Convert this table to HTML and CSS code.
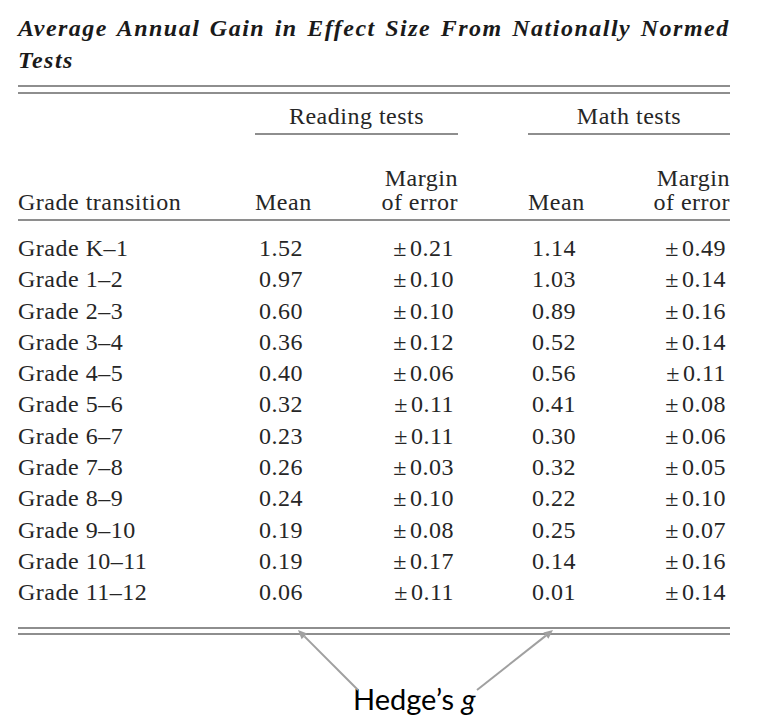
FILE: index.html
```html
<!DOCTYPE html>
<html lang="en">
<head>
<meta charset="utf-8">
<title>Average Annual Gain in Effect Size</title>
<link rel="stylesheet" href="styles.css">
</head>
<body>
<div class="page">
  <h1 class="title">Average Annual Gain in Effect Size From Nationally Normed<br>Tests</h1>
  <div class="double-rule top"></div>
  <table class="gains">
    <colgroup>
      <col class="c-grade"><col class="c-mean"><col class="c-moe"><col class="c-gap"><col class="c-mean"><col class="c-moe2">
    </colgroup>
    <thead>
      <tr class="groups">
        <th></th>
        <th colspan="2" class="group">Reading tests</th>
        <th></th>
        <th colspan="2" class="group">Math tests</th>
      </tr>
      <tr class="cols">
        <th class="lbl">Grade transition</th>
        <th class="mean">Mean</th>
        <th class="moe">Margin<br>of error</th>
        <th></th>
        <th class="mean">Mean</th>
        <th class="moe">Margin<br>of error</th>
      </tr>
    </thead>
    <tbody>
      <tr><td class="lbl">Grade K–1</td><td class="mean">1.52</td><td class="moe"><span class="pm">±</span>0.21</td><td></td><td class="mean">1.14</td><td class="moe"><span class="pm">±</span>0.49</td></tr>
      <tr><td class="lbl">Grade 1–2</td><td class="mean">0.97</td><td class="moe"><span class="pm">±</span>0.10</td><td></td><td class="mean">1.03</td><td class="moe"><span class="pm">±</span>0.14</td></tr>
      <tr><td class="lbl">Grade 2–3</td><td class="mean">0.60</td><td class="moe"><span class="pm">±</span>0.10</td><td></td><td class="mean">0.89</td><td class="moe"><span class="pm">±</span>0.16</td></tr>
      <tr><td class="lbl">Grade 3–4</td><td class="mean">0.36</td><td class="moe"><span class="pm">±</span>0.12</td><td></td><td class="mean">0.52</td><td class="moe"><span class="pm">±</span>0.14</td></tr>
      <tr><td class="lbl">Grade 4–5</td><td class="mean">0.40</td><td class="moe"><span class="pm">±</span>0.06</td><td></td><td class="mean">0.56</td><td class="moe"><span class="pm">±</span>0.11</td></tr>
      <tr><td class="lbl">Grade 5–6</td><td class="mean">0.32</td><td class="moe"><span class="pm">±</span>0.11</td><td></td><td class="mean">0.41</td><td class="moe"><span class="pm">±</span>0.08</td></tr>
      <tr><td class="lbl">Grade 6–7</td><td class="mean">0.23</td><td class="moe"><span class="pm">±</span>0.11</td><td></td><td class="mean">0.30</td><td class="moe"><span class="pm">±</span>0.06</td></tr>
      <tr><td class="lbl">Grade 7–8</td><td class="mean">0.26</td><td class="moe"><span class="pm">±</span>0.03</td><td></td><td class="mean">0.32</td><td class="moe"><span class="pm">±</span>0.05</td></tr>
      <tr><td class="lbl">Grade 8–9</td><td class="mean">0.24</td><td class="moe"><span class="pm">±</span>0.10</td><td></td><td class="mean">0.22</td><td class="moe"><span class="pm">±</span>0.10</td></tr>
      <tr><td class="lbl">Grade 9–10</td><td class="mean">0.19</td><td class="moe"><span class="pm">±</span>0.08</td><td></td><td class="mean">0.25</td><td class="moe"><span class="pm">±</span>0.07</td></tr>
      <tr><td class="lbl">Grade 10–11</td><td class="mean">0.19</td><td class="moe"><span class="pm">±</span>0.17</td><td></td><td class="mean">0.14</td><td class="moe"><span class="pm">±</span>0.16</td></tr>
      <tr><td class="lbl">Grade 11–12</td><td class="mean">0.06</td><td class="moe"><span class="pm">±</span>0.11</td><td></td><td class="mean">0.01</td><td class="moe"><span class="pm">±</span>0.14</td></tr>
    </tbody>
  </table>
  <div class="double-rule bottom"></div>
  <p class="caption">Hedge’s <em>g</em></p>
  <svg class="arrows" width="757" height="720" viewBox="0 0 757 720" aria-hidden="true">
    <line x1="358" y1="678" x2="304.4" y2="624.4" />
    <polygon points="298,618 307.2,621.6 301.6,627.2" />
    <line x1="477" y1="678" x2="545.9" y2="623.6" />
    <polygon points="553,618 548.4,626.7 543.4,620.4" />
  </svg>
</div>
</body>
</html>
```
FILE: styles.css
```css
html, body {
  margin: 0;
  padding: 0;
  background: #ffffff;
}

.page {
  position: relative;
  width: 757px;
  height: 720px;
  padding-left: 18px;
  box-sizing: border-box;
  font-family: "Liberation Serif", "Times New Roman", serif;
  color: #262626;
}

.title {
  margin: 12px 0 0 0;
  font-family: "Liberation Serif", "Times New Roman", serif;
  font-size: 24px;
  font-weight: bold;
  font-style: italic;
  line-height: 32px;
  letter-spacing: 1.5px;
  word-spacing: 2px;
  color: #1a1a1a;
  white-space: nowrap;
}

.double-rule {
  width: 712px;
  height: 4px;
  border-top: 2px solid #8e8e8e;
  border-bottom: 2px solid #8e8e8e;
}

.double-rule.top {
  margin-top: 9px;
  height: 5px;
}

.double-rule.bottom {
  margin-top: 18px;
}

.gains {
  width: 712px;
  table-layout: fixed;
  border-collapse: separate;
  border-spacing: 0;
  font-size: 24px;
  letter-spacing: 0.5px;
}

.c-grade { width: 237px; }
.c-mean { width: 100px; }
.c-moe { width: 103px; }
.c-gap { width: 70px; }
.c-moe2 { width: 102px; }

.gains th,
.gains td {
  padding: 0;
  font-weight: normal;
  white-space: nowrap;
}

.groups th {
  padding: 6px 0 1px 0;
  line-height: 32px;
}

.groups .group {
  text-align: center;
  border-bottom: 2px solid #8e8e8e;
}

.cols th {
  padding: 31px 0 5px 0;
  line-height: 24px;
  vertical-align: bottom;
  border-bottom: 2px solid #8e8e8e;
}

.gains .lbl { text-align: left; }
.gains .mean { text-align: left; }
.gains .moe { text-align: right; }

.gains td {
  line-height: 31.3px;
}

.gains td.mean { padding-left: 4px; }
.gains td.moe { padding-right: 4px; }

.gains tbody tr:first-child td {
  padding-top: 12px;
}

.pm {
  margin-right: 3px;
}

.caption {
  margin: 47px 0 0 335px;
  font-family: Lato, "Open Sans", sans-serif;
  font-size: 29px;
  line-height: 34px;
  color: #000000;
}

.caption em {
  font-style: italic;
}

.arrows {
  position: absolute;
  top: 0;
  left: 0;
  pointer-events: none;
}

.arrows line {
  stroke: #a0a0a0;
  stroke-width: 2;
}

.arrows polygon {
  fill: #a0a0a0;
}
```
